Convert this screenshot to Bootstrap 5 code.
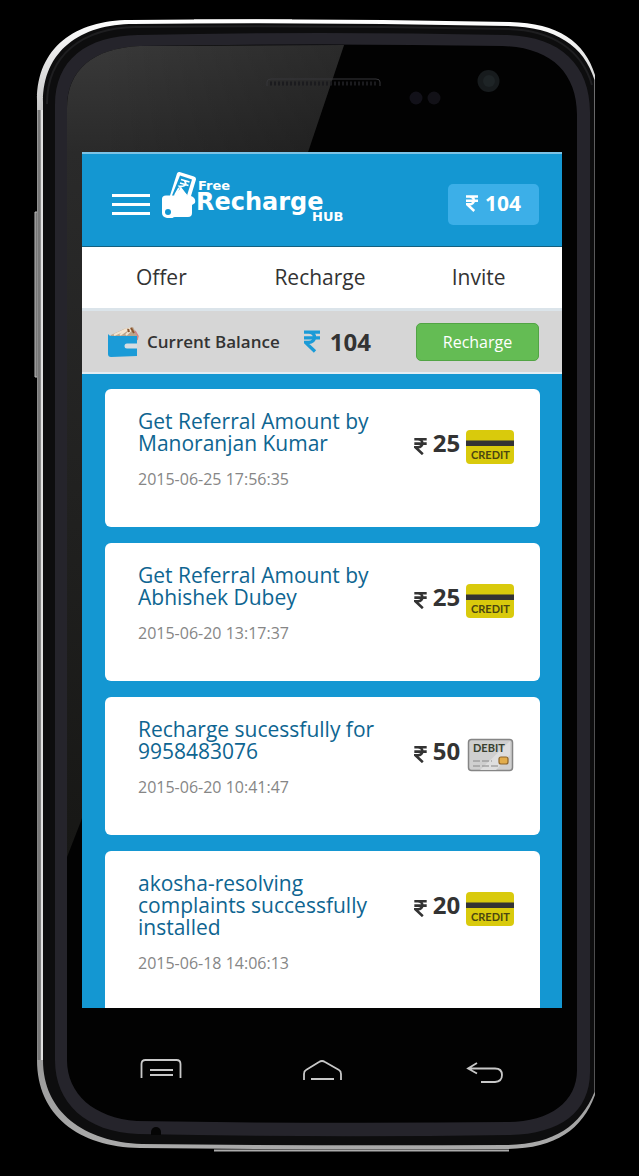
<!DOCTYPE html>
<html lang="en">
<head>
<meta charset="utf-8">
<meta name="viewport" content="width=device-width, initial-scale=1">
<title>Free Recharge Hub</title>
<link href="https://cdn.jsdelivr.net/npm/bootstrap@5.3.0/dist/css/bootstrap.min.css" rel="stylesheet">
<style>
  body { background: #000; color: #333; font-family: "Open Sans", "Noto Sans", sans-serif; }
  .phone { padding: 152px 77px 0 82px; }
  .phone-body { inset: 0; z-index: 0; }
  .app-screen { z-index: 1; background: #1497d2; border-top: 2px solid #7cc3e6; }
  .app-header { height: 93px; padding: 8px 23px 0 30px; border-bottom: 1px solid #14607f; }
  .menu-btn { width: 38px; }
  .brand { margin-left: 10px; padding-bottom: 12px; }
  .brand text { font-family: "DejaVu Sans", sans-serif; font-weight: 700; fill: #fff; }
  .pill-amount { width: 91px; height: 41px; padding-bottom: 2px; background: #3cafe8; border-radius: 5px; font-size: 21px; line-height: 24px; font-weight: 700; gap: 7px; }
  .tabs-bar { height: 61px; padding-right: 4px; }
  .tabs-bar a { color: #333; font-size: 21px; }
  .balance-bar { height: 66px; padding: 0 23px 0 25px; background: #d6d6d6; border-top: 3px solid #dbe4ea; border-bottom: 2px solid #e3edf3; }
  .balance-label { margin-left: 8px; font-size: 17px; font-weight: 600; }
  .balance-value { font-size: 24px; line-height: 28px; font-weight: 700; gap: 10px; }
  .recharge-btn { width: 123px; height: 38px; padding: 0; font-size: 16px; color: #fff; background: #64bc54; border: 1px solid #52a445; border-radius: 5px; }
  .recharge-btn:hover { color: #fff; background: #58ae49; }
  .history { padding: 15px 22px 0 23px; gap: 16px; }
  .entry { padding: 21px 26px 38px 33px; border-radius: 6px; background: #fff; }
  .entry:last-child { padding-bottom: 35px; border-radius: 6px 6px 0 0; }
  .entry-title { margin: 0 0 15px; font-size: 21px; line-height: 22px; font-weight: 400; color: #0e6591; }
  .entry-date { display: block; font-size: 16px; line-height: 20px; color: #868686; }
  .entry-amount { width: 100px; padding-top: 20px; font-size: 24px; line-height: 34px; font-weight: 700; }
  .entry-amount > span { margin-top: -4px; }
  .nav-keys { z-index: 1; height: 168px; padding: 50px 58px 0 58px; }
</style>
</head>
<body>
<svg class="d-none" aria-hidden="true">
  <symbol id="rupee" viewBox="0 0 16 22">
    <path d="M0 1.700h16M0 7.300h16M1 1.700h3.500c8 0 8 10.300 0 10.300H1.500L11 21" fill="none" stroke="currentColor" stroke-width="3.300"/>
  </symbol>
  <symbol id="credit" viewBox="0 0 48 34">
    <rect width="48" height="34" rx="4" fill="#d9ca0c"/>
    <rect y="10.500" width="48" height="5.500" fill="#333"/>
    <text x="5" y="29" font-size="11" font-family="Lato, sans-serif" font-weight="700" fill="#4b4610">CREDIT</text>
  </symbol>
</svg>

<main class="phone position-relative">
  <svg class="phone-body position-absolute w-100 h-100" viewBox="0 0 639 1176" preserveAspectRatio="none" aria-hidden="true">
    <defs>
      <linearGradient id="rim" x1="0" y1="0" x2="0" y2="1">
        <stop offset="0" stop-color="#fff"/><stop offset=".12" stop-color="#aaa"/>
        <stop offset=".85" stop-color="#8c8c8c"/><stop offset="1" stop-color="#aaa"/>
      </linearGradient>
      <linearGradient id="shineSide" gradientUnits="userSpaceOnUse" x1="0" y1="46" x2="0" y2="860">
        <stop offset="0" stop-color="#393939"/><stop offset=".13" stop-color="#2a2a2a"/><stop offset="1" stop-color="#171715"/>
      </linearGradient>
      <linearGradient id="fade" gradientUnits="userSpaceOnUse" x1="100" y1="0" x2="340" y2="0">
        <stop offset="0" stop-color="#000" stop-opacity="0"/><stop offset="1" stop-color="#000" stop-opacity=".25"/>
      </linearGradient>
    </defs>
    <path d="M38 212h-3v165h3" fill="#777" stroke="#bbb"/>
    <path d="M37 100C37 48 75 20 130 20Q320 18 510 22C558 23 585 42 595 75V1095C582 1130 555 1149 505 1149Q320 1150 140 1148C78 1147 37 1115 37 1060Z" fill="url(#rim)"/>
    <path d="M43 102C43 51 80 24 134 24Q320 22 508 26C556 27 584 46 594.500 80V1092C580 1127 553 1145 503 1145Q320 1146 142 1144C84 1142 43 1112 43 1060Z" fill="#0d0d0e"/>
    <path d="M47 104C47 55 82 28 136 27Q320 25 507 29C552 30 582 50 592 85" fill="none" stroke="#1e1e20" stroke-width="2"/>
    <path d="M39 110V1060" stroke="#777" stroke-width="3"/><path d="M42 110V1060" stroke="#e0e0e0" stroke-width="2"/>
    <path d="M194 20.500H292" stroke="#fff" stroke-width="2"/><path d="M214 1150.500H509" stroke="#aaa" stroke-width="2"/>
    <path d="M55 105C55 60 86 36 138 35Q320 31 506 35C560 36 590 65 590 112V1072C590 1112 560 1134 510 1135Q320 1138 138 1134C86 1132 55 1103 55 1060Z" fill="#25242b"/>
    <path d="M67 108C67 70 93 48 140 46Q320 43 502 46C550 47 577 72 577 115V1070C577 1102 550 1122 507 1122Q320 1124 137 1121C94 1118 67 1094 67 1060Z" fill="#020202"/>
    <path d="M67 108C67 70 93 48 140 46L344 45L308 152L81 821L67 857Z" fill="url(#shineSide)"/>
    <path d="M67 108C67 70 93 48 140 46L344 45L308 152L81 821L67 857Z" fill="url(#fade)"/>
    <path d="M267 86V82q0-3 4-3H376q4 0 4 3v4" fill="none" stroke="#37373a"/>
    <path d="M270 83.500H378" stroke="#1b1b1e" stroke-width="4" stroke-dasharray="2 2"/>
    <circle cx="488.500" cy="81" r="11" fill="#171b1d"/><circle cx="489" cy="81" r="6" fill="#1e2426"/>
    <circle cx="416" cy="98" r="6.500" fill="#121119"/><circle cx="434" cy="98" r="6.500" fill="#121117"/>
    <path d="M151 1135v-3a5 5 0 0 1 10 0v3z" fill="#050505"/>
  </svg>

  <div class="app-screen position-relative">
    <header class="app-header d-flex align-items-center text-white">
      <button type="button" class="menu-btn btn p-0 border-0 rounded-0 d-flex text-white" aria-label="Menu">
        <svg width="38" height="24" viewBox="0 0 38 24"><path d="M0 3.500h38M0 12.500h38M0 21.500h38" stroke="currentColor" stroke-width="3"/></svg>
      </button>
      <a href="#" class="brand d-flex" aria-label="Free Recharge Hub">
        <svg width="190" height="56" viewBox="0 0 190 56">
          <path d="M17 3.500q.6-2 2.600-1.500L34 6.500q2.500 1 2 3L31 26l2 1q3 2 2 6l-3 2v8q0 4-4 4H15q-1.500 0-2.500 1H7q-5-1-5-5V29q0-3.500 4-3.500h4Z" fill="#fff"/>
          <path d="M20 5.500 32 9.500 27 25.500q-1-2-2.500-3L21 18l-4 4-3 3.500h-2Z" fill="#1497d2"/>
          <path d="m21 9.500 8.500 2.500M20 13l8.500 2.500M24.500 10.500q4 6-5 6l7 9M19 18l-4 7" fill="none" stroke="#fff" stroke-width="1.800"/>
          <circle cx="8" cy="42" r="3" fill="#1497d2"/>
          <text x="38" y="20" font-size="13">Free</text>
          <text x="36" y="40" font-size="24">Recharge</text>
          <text x="152" y="51" font-size="13">HUB</text>
        </svg>
      </a>
      <div class="pill-amount ms-auto d-flex align-items-center justify-content-center">
        <svg width="12" height="19" role="img" aria-label="Rupees"><use href="#rupee"/></svg><span>104</span>
      </div>
    </header>

    <nav class="tabs-bar bg-white row g-0 align-items-center text-center" aria-label="Sections">
      <a href="#" class="col-4 text-decoration-none">Offer</a>
      <a href="#" class="col-4 text-decoration-none">Recharge</a>
      <a href="#" class="col-4 text-decoration-none">Invite</a>
    </nav>

    <section class="balance-bar d-flex align-items-center" aria-label="Current balance">
      <svg width="32" height="32" viewBox="0 0 32 32" aria-hidden="true">
        <path d="M4 9 17 3l9-2 4 8v7H4Z" fill="#bca58c"/>
        <path d="m7 9 13-6M13 9l10-7M19 9l6-6" stroke="#f2e3cf" stroke-width="2"/>
        <path d="m24 2 3 5M21 3l1 3" stroke="#8b552f" stroke-width="2"/>
        <path d="M28 5l3 5-1 4" stroke="#cf8488" stroke-width="1.500" fill="none"/>
        <path d="M1 8q1 2 4 2h25v20L4 31q-3 0-3-3Z" fill="#1b9bd7"/>
        <path d="M30 17.500H20a2.500 2.500 0 0 0 0 5h10Z" fill="#d6dde2"/>
      </svg>
      <span class="balance-label">Current Balance</span>
      <span class="balance-value d-flex align-items-center ms-4">
        <svg width="16" height="23" role="img" aria-label="Rupees" color="#1b9bd7"><use href="#rupee"/></svg>104
      </span>
      <button type="button" class="recharge-btn btn ms-auto">Recharge</button>
    </section>

    <div class="history d-flex flex-column">
      <article class="entry d-flex">
        <div class="flex-fill">
          <h2 class="entry-title">Get Referral Amount by Manoranjan Kumar</h2>
          <time class="entry-date">2015-06-25 17:56:35</time>
        </div>
        <div class="entry-amount flex-shrink-0 d-flex justify-content-between">
          <svg width="13" height="17" class="mt-2" role="img" aria-label="Rupees"><use href="#rupee"/></svg>
          <span>25</span>
          <svg width="48" height="34" role="img" aria-label="Credit"><use href="#credit"/></svg>
        </div>
      </article>
      <article class="entry d-flex">
        <div class="flex-fill">
          <h2 class="entry-title">Get Referral Amount by Abhishek Dubey</h2>
          <time class="entry-date">2015-06-20 13:17:37</time>
        </div>
        <div class="entry-amount flex-shrink-0 d-flex justify-content-between">
          <svg width="13" height="17" class="mt-2" role="img" aria-label="Rupees"><use href="#rupee"/></svg>
          <span>25</span>
          <svg width="48" height="34" role="img" aria-label="Credit"><use href="#credit"/></svg>
        </div>
      </article>
      <article class="entry d-flex">
        <div class="flex-fill">
          <h2 class="entry-title">Recharge sucessfully for 9958483076</h2>
          <time class="entry-date">2015-06-20 10:41:47</time>
        </div>
        <div class="entry-amount flex-shrink-0 d-flex justify-content-between">
          <svg width="13" height="17" class="mt-2" role="img" aria-label="Rupees"><use href="#rupee"/></svg>
          <span>50</span>
          <svg width="48" height="34" viewBox="0 0 48 34" role="img" aria-label="Debit">
            <rect x="2.500" y="1.500" width="44" height="31" rx="3" fill="#cfcfcf" stroke="#858585" stroke-width="1.500"/>
            <path d="M14 32 44 3v14L30 32Z" fill="#dedede"/>
            <text x="7" y="14" font-size="11" font-family="Lato, sans-serif" font-weight="700" fill="#37402f">DEBIT</text>
            <path d="M7 23h19M7 28h26" stroke="#888" stroke-dasharray="7 2"/>
            <rect x="33" y="19" width="9" height="7" rx="2" fill="#e2ad4c" stroke="#8e6428" stroke-width="1.200"/>
          </svg>
        </div>
      </article>
      <article class="entry d-flex">
        <div class="flex-fill">
          <h2 class="entry-title">akosha-resolving complaints successfully installed</h2>
          <time class="entry-date">2015-06-18 14:06:13</time>
        </div>
        <div class="entry-amount flex-shrink-0 d-flex justify-content-between">
          <svg width="13" height="17" class="mt-2" role="img" aria-label="Rupees"><use href="#rupee"/></svg>
          <span>20</span>
          <svg width="48" height="34" role="img" aria-label="Credit"><use href="#credit"/></svg>
        </div>
      </article>
    </div>
  </div>

  <div class="nav-keys position-relative d-flex justify-content-between align-items-start">
    <button type="button" class="btn p-0 border-0 d-flex" aria-label="Recent apps">
      <svg width="42" height="24" viewBox="0 0 42 24" fill="none" stroke="#c8c8c8" stroke-width="1.800"><path d="M1.500 20V6q0-4 4-4h31q4 0 4 4v14M10 12h23M10 17h23"/></svg>
    </button>
    <button type="button" class="btn p-0 border-0 d-flex" aria-label="Home">
      <svg width="42" height="24" viewBox="0 0 42 24" fill="none" stroke="#c8c8c8" stroke-width="1.800"><path d="M1 22v-6q0-3 2-4L16 4q3-2 6 0l14 8q2 1 2 4v6M8 21h23"/></svg>
    </button>
    <button type="button" class="btn p-0 border-0 d-flex" aria-label="Back">
      <svg width="38" height="26" viewBox="0 0 38 26" fill="none" stroke="#c8c8c8" stroke-width="1.800"><path d="M11 5 2 10.500l9 5M2 10.500h27q7 0 7 6.500t-7 7H15"/></svg>
    </button>
  </div>
</main>
<script src="https://cdn.jsdelivr.net/npm/bootstrap@5.3.0/dist/js/bootstrap.bundle.min.js"></script>
</body>
</html>
